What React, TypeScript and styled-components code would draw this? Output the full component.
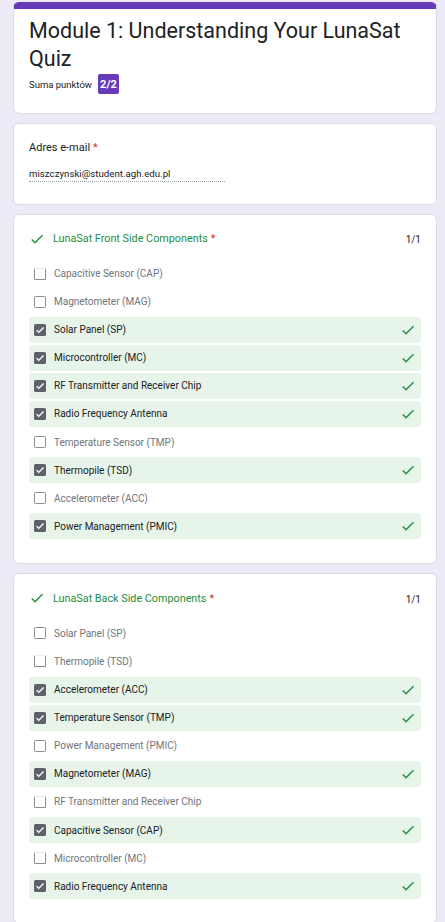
import React from "react";
import styled, { createGlobalStyle } from "styled-components";

const Global = createGlobalStyle`
  html, body { margin: 0; padding: 0; background: #ede9f7; }
  body { font-family: Roboto, "Noto Sans", Arial, sans-serif; color: #202124; }
`;

const Page = styled.div`
  display: flex;
  flex-direction: column;
  gap: 9px;
  padding: 2px 8px 2px 13px;
  width: 445px;
  box-sizing: border-box;
`;

const Card = styled.div`
  background: #fff;
  border: 1px solid #dadce0;
  border-radius: 6px;
  box-sizing: border-box;
`;

const HeaderCard = styled(Card)`
  border-top: 7px solid #673ab7;
  padding: 8px 15px 18.5px 15px;
`;

const Title = styled.h1`
  margin: 0;
  font-weight: 400;
  font-size: 21.5px;
  line-height: 28px;
  color: #202124;
`;

const ScoreRow = styled.div`
  display: flex;
  align-items: center;
  gap: 6px;
  margin-top: 1px;
  font-size: 9.5px;
  color: #202124;
`;

const Badge = styled.span`
  display: inline-flex;
  align-items: center;
  justify-content: center;
  width: 21px;
  height: 20px;
  border-radius: 2px;
  background: #673ab7;
  color: #fff;
  font-size: 11px;
  font-weight: 700;
`;

const EmailCard = styled(Card)`
  padding: 16px 15px 22px 15px;
`;

const Label = styled.div`
  font-size: 11px;
  line-height: 16px;
  color: #202124;
`;

const Req = styled.span`
  color: #d93025;
  margin-left: 3px;
`;

const EmailValue = styled.div`
  margin-top: 11px;
  width: 196px;
  font-size: 9.7px;
  line-height: 13px;
  padding-bottom: 1px;
  border-bottom: 1px dotted #9aa0a6;
  color: #202124;
`;

const QuestionCard = styled(Card)`
  padding: 14px 15px 24px 15px;
`;

const QHead = styled.div`
  display: flex;
  align-items: center;
  height: 20px;
  margin-bottom: 12px;
`;

const QTitle = styled.div`
  flex: 1;
  display: flex;
  align-items: center;
  gap: 8px;
  font-size: 10.8px;
  color: #1e8e3e;
`;

const QScore = styled.div`
  font-size: 10px;
  color: #202124;
  margin-top: 2px;
`;

const Options = styled.div`
  display: flex;
  flex-direction: column;
  gap: 2.1px;
`;

const Row = styled.div<{ $correct: boolean }>`
  display: flex;
  align-items: center;
  height: 26px;
  padding: 0 5px 0 5px;
  border-radius: 3px;
  background: ${(p) => (p.$correct ? "#e6f4ea" : "transparent")};
`;

const Box = styled.span<{ $checked: boolean; $faded: boolean }>`
  display: inline-flex;
  align-items: center;
  justify-content: center;
  width: 12px;
  height: 12px;
  box-sizing: border-box;
  border-radius: 1.5px;
  border: ${(p) => (p.$checked ? "none" : "1.3px solid #8a8e93")};
  border-top-color: ${(p) => (p.$faded ? "#ececec" : "#8a8e93")};
  background: ${(p) => (p.$checked ? "#5f6368" : "#fff")};
  flex-shrink: 0;
`;

const OptText = styled.span<{ $checked: boolean }>`
  flex: 1;
  margin-left: 8px;
  font-size: 10px;
  color: ${(p) => (p.$checked ? "#202124" : "#70757a")};
`;

const CheckIcon = ({ size = 16 }: { size?: number }) => (
  <svg width={size} height={size} viewBox="0 0 24 24">
    <path fill="#1e8e3e" d="M9 16.17L4.83 12l-1.42 1.41L9 19 21 7l-1.41-1.41z" />
  </svg>
);

const BoxTick = () => (
  <svg width="10" height="10" viewBox="0 0 24 24">
    <path fill="#fff" d="M9 16.17L4.83 12l-1.42 1.41L9 19 21 7l-1.41-1.41z" stroke="#fff" strokeWidth="1.5" />
  </svg>
);

type Opt = { text: string; checked: boolean; faded?: boolean };

const q1: Opt[] = [
  { text: "Capacitive Sensor (CAP)", checked: false, faded: true },
  { text: "Magnetometer (MAG)", checked: false },
  { text: "Solar Panel (SP)", checked: true },
  { text: "Microcontroller (MC)", checked: true },
  { text: "RF Transmitter and Receiver Chip", checked: true },
  { text: "Radio Frequency Antenna", checked: true },
  { text: "Temperature Sensor (TMP)", checked: false },
  { text: "Thermopile (TSD)", checked: true },
  { text: "Accelerometer (ACC)", checked: false },
  { text: "Power Management (PMIC)", checked: true },
];

const q2: Opt[] = [
  { text: "Solar Panel (SP)", checked: false },
  { text: "Thermopile (TSD)", checked: false, faded: true },
  { text: "Accelerometer (ACC)", checked: true },
  { text: "Temperature Sensor (TMP)", checked: true },
  { text: "Power Management (PMIC)", checked: false },
  { text: "Magnetometer (MAG)", checked: true },
  { text: "RF Transmitter and Receiver Chip", checked: false, faded: true },
  { text: "Capacitive Sensor (CAP)", checked: true },
  { text: "Microcontroller (MC)", checked: false, faded: true },
  { text: "Radio Frequency Antenna", checked: true },
];

const Question = ({ title, opts }: { title: string; opts: Opt[] }) => (
  <QuestionCard>
    <QHead>
      <QTitle>
        <CheckIcon size={16} />
        <span>
          {title}
          <Req>*</Req>
        </span>
      </QTitle>
      <QScore>1/1</QScore>
    </QHead>
    <Options>
      {opts.map((o, i) => (
        <Row key={i} $correct={o.checked}>
          <Box $checked={o.checked} $faded={!!o.faded}>
            {o.checked && <BoxTick />}
          </Box>
          <OptText $checked={o.checked}>{o.text}</OptText>
          {o.checked && <CheckIcon />}
        </Row>
      ))}
    </Options>
  </QuestionCard>
);

export default function App() {
  return (
    <>
      <Global />
      <Page>
        <HeaderCard>
          <Title>Module 1: Understanding Your LunaSat Quiz</Title>
          <ScoreRow>
            <span>Suma punktów</span>
            <Badge>2/2</Badge>
          </ScoreRow>
        </HeaderCard>
        <EmailCard>
          <Label>
            Adres e-mail<Req>*</Req>
          </Label>
          <EmailValue>miszczynski@student.agh.edu.pl</EmailValue>
        </EmailCard>
        <Question title="LunaSat Front Side Components" opts={q1} />
        <Question title="LunaSat Back Side Components" opts={q2} />
      </Page>
    </>
  );
}
